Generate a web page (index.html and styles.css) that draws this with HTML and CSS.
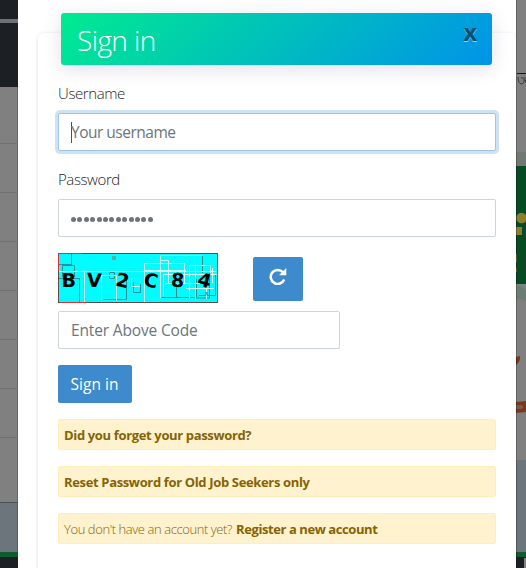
FILE: index.html
```html
<!DOCTYPE html>
<html lang="en">
<head>
    <meta charset="utf-8">
    <title>Sign in</title>
    <link rel="stylesheet" href="styles.css">
</head>
<body>
    <div class="page">
        <div class="backdrop-left">
            <div class="bar"></div>
            <div class="bar bar-tall"></div>
            <div class="row row-first"></div>
            <div class="row"></div>
            <div class="row"></div>
            <div class="row"></div>
            <div class="row"></div>
            <div class="row"></div>
            <div class="row"></div>
            <div class="row row-last"></div>
            <div class="footer-top"></div>
            <div class="footer-line"></div>
        </div>
        <div class="modal">
            <div class="card">
                <div class="card-header">
                    <h3>Sign in</h3>
                    <span class="close">x</span>
                </div>
                <form class="card-body">
                    <label for="username">Username</label>
                    <div class="form-control focused" id="username"><span class="caret"></span><span class="name-hint">Your username</span></div>
                    <label for="password" class="label-password">Password</label>
                    <div class="form-control dots" id="password"><i></i><i></i><i></i><i></i><i></i><i></i><i></i><i></i><i></i><i></i><i></i><i></i><i></i></div>
                    <div class="captcha-row">
                        <svg class="captcha" width="160" height="50" viewBox="0 0 160 50">
                            <rect width="160" height="50" fill="#00fcff"/>
                            <g fill="none" stroke="#2f8f94">
                                <path d="M0 11.500H13.500V0M4.500 24V12.500H16.500V24M0 25.500H21.500V49M45.500 46.500H68.500V23M51.500 19.500H56.500V25.500H51.500ZM75.500 29V39.500H82.500V31M103.500 44.500H138.500V26M144.500 3V20M110.500 12V30M151.500 20V45H138M157.500 21V42.500H141M118.500 31V45"/>
                            </g>
                            <g fill="none" stroke="#d2f7ef">
                                <path d="M0 18.500H159M26.500 49V17.500M43.500 47V22.500H58.500V48M73.500 25V33.500H82M86.500 49V10.500H110M86 17.500H128M102.500 45V2.500H144M110.500 30V7.500H103M105.500 43V21.500H159M110 10.500H126.500V30M131.500 45V12.500H152.500V20M137.500 48V11.500M107 30.500H142M128 35.500H156M148.500 46V23M154.500 15V30"/>
                            </g>
                            <path d="M54 3h4v4h-4zM147 39h3v3h-3z" fill="#5aa9ad"/>
                            <g class="captcha-text">
                                <text x="3.500" y="34">B</text>
                                <text x="29" y="34" transform="rotate(3 37 26)">V</text>
                                <text x="58" y="34" transform="rotate(12 65 27)">2</text>
                                <text x="86" y="34" transform="rotate(12 93 27)">C</text>
                                <text x="113" y="34" transform="rotate(5 120 27)">8</text>
                                <text x="140" y="34" transform="rotate(15 147 27)">4</text>
                            </g>
                            <rect x="0.500" y="0.500" width="159" height="49" fill="none" stroke="#66494b"/>
                            <path d="M159.500 14V50M0.500 3V18M3 49.500H28M0 .5H24" fill="none" stroke="#e33235"/>
                        </svg>
                        <button type="button" class="btn btn-refresh" aria-label="Refresh">
                            <svg width="18" height="17" viewBox="0 0 18 17">
                                <path d="M14 4.300A7 7 0 1 0 15.200 11.500" fill="none" stroke="#fff" stroke-width="2.500"/>
                                <path d="M17.300 0V7.300H10Z" fill="#fff"/>
                            </svg>
                        </button>
                    </div>
                    <div class="form-control code"><span class="code-hint">Enter Above Code</span></div>
                    <button type="button" class="btn btn-submit">Sign in</button>
                    <div class="alert"><a class="forgot">Did you forget your password?</a></div>
                    <div class="alert"><a class="reset">Reset Password for Old Job Seekers only</a></div>
                    <div class="alert"><span class="question">You don't have an account yet?</span><a class="register">Register a new account</a></div>
                </form>
            </div>
        </div>
        <div class="backdrop-right">
            <svg width="10" height="568" viewBox="0 0 10 568">
                <rect width="10" height="568" fill="#808080"/>
                <path d="M1 73.500H10" stroke="#171717"/>
                <path d="M2 77Q2 84 6 84Q9 83 8 79M5 78H10M8 80Q10 79 10 83" fill="none" stroke="#3c3c3c"/>
                <rect y="152" width="10" height="14" fill="#707a73"/>
                <rect y="166" width="10" height="118" fill="#074b24"/>
                <circle cx="5.500" cy="218" r="5.300" fill="#8a8130"/>
                <path d="M0 227H6V235H0Z" fill="#8a8130"/>
                <path d="M0 254H1V262H0ZM0 268H1V272H0Z" fill="#65702a"/>
                <path d="M0 284H10V301Q5 299 0 299Z" fill="#6b7d75"/>
                <path d="M0 284H10V290Q6 286 0 286Z" fill="#7c8480"/>
                <path d="M0 357L4 356Q5 361 0 365Z" fill="#753a20"/>
                <path d="M0 402L10 401V412L0 413Z" fill="#753a20"/>
                <path d="M0 406H6V408H0" fill="none" stroke="#84746d"/>
                <rect y="460" width="10" height="92" fill="#6c757b"/>
                <rect y="552" width="10" height="5" fill="#105b30"/>
                <rect y="557" width="10" height="11" fill="#1c1f24"/>
                <rect x="8" y="558" width="2" height="10" fill="#808080"/>
                <rect width="1" height="568" fill="#000" opacity=".25"/>
            </svg>
        </div>
    </div>
</body>
</html>
```

FILE: styles.css
```css
* {
    box-sizing: border-box;
}

body {
    margin: 0;
    font-family: "Open Sans", "Noto Sans", sans-serif;
    font-weight: 300;
    font-size: 16px;
    line-height: 24px;
    color: #212529;
    background: #fff;
}

.page {
    display: flex;
    height: 568px;
    overflow: hidden;
}

/* dimmed page behind the modal */
.backdrop-left {
    width: 18px;
    flex: none;
    background: #1c1f24;
}

.bar {
    height: 23px;
    border-bottom: 4px solid #6b7375;
}

.bar-tall {
    height: 64px;
    border: none;
}

.row {
    height: 49px;
    background: #808080;
    border-bottom: 1px solid #6f7071;
    box-shadow: inset -1px 0 0 #666;
}

.row-first {
    height: 57px;
}

.row-last {
    height: 65px;
    border-color: #4b5053;
}

.footer-top {
    height: 49px;
    background: #6c757b;
    box-shadow: inset -1px 0 0 #565d62;
}

.footer-line {
    height: 5px;
    background: #105b30;
}

.backdrop-right {
    width: 10px;
    flex: none;
}

.backdrop-right svg {
    display: block;
}

.modal {
    width: 498px;
    flex: none;
    padding: 33px 0 0 20px;
    background: #fff;
    overflow: hidden;
}

.card {
    height: 560px;
    padding: 0 20px;
    border-radius: 6px;
    box-shadow: 0 1px 4px rgba(0, 0, 0, 0.14);
}

.card-header {
    display: flex;
    justify-content: space-between;
    width: 431px;
    height: 52px;
    margin: 0 3px;
    padding: 0 15px 0 16px;
    transform: translateY(-20px);
    border-radius: 3px;
    background: linear-gradient(135deg, #00eb90, #0093e9);
    box-shadow: 0 4px 18px rgba(70, 70, 130, 0.16);
    color: #fff;
}

.card-header h3 {
    margin: 0;
    font-size: 28px;
    font-weight: 300;
    line-height: 54px;
    letter-spacing: -0.6px;
}

.close {
    font-size: 24px;
    font-weight: 700;
    line-height: 38px;
    color: #075273;
    text-shadow: 0 1px 0 #8cd4ee;
}

.card-body {
    display: flex;
    flex-direction: column;
    align-items: flex-start;
    margin-top: -4px;
}

label {
    height: 24px;
    margin-bottom: 8px;
    font-size: 15px;
    letter-spacing: -0.4px;
}

.label-password {
    margin-top: 16px;
    margin-bottom: 8px;
}

.form-control {
    display: flex;
    align-items: center;
    width: 438px;
    height: 38px;
    flex: none;
    padding: 0 12px;
    border: 1px solid #ced4da;
    border-radius: 2px;
    background: #fff;
    font-size: 15.5px;
    font-weight: 400;
    color: #6c757d;
}

.focused {
    border-color: #9fc5e8;
    box-shadow: 0 0 0 3px #cfe2f3;
}

.caret {
    width: 1px;
    height: 21px;
    margin-right: -1px;
    background: #495057;
}

.name-hint {
    letter-spacing: -0.5px;
}

.code-hint {
    letter-spacing: -0.15px;
}

.dots {
    gap: 1.4px;
    padding-top: 2px;
}

.dots i {
    width: 5px;
    height: 5px;
    border-radius: 50%;
    background: #6c757d;
}

.captcha-row {
    display: flex;
    height: 58px;
    margin-top: 16px;
}

.captcha-text {
    font-family: "DejaVu Sans", sans-serif;
    font-size: 19px;
    font-weight: 700;
}

.btn {
    border: none;
    border-radius: 2px;
    background: #3d8acd;
    color: #fff;
    font-family: inherit;
    font-weight: 400;
}

.btn-refresh {
    width: 50px;
    height: 44px;
    margin: 4px 0 0 35px;
    padding: 0 0 6px;
}

.btn-refresh svg {
    display: block;
    margin: 0 auto;
}

.code {
    width: 282px;
}

.btn-submit {
    width: 74px;
    height: 38px;
    margin: 16px 0 0;
    padding: 0 1px 0 0;
    font-size: 15.5px;
}

.alert {
    display: flex;
    align-items: center;
    width: 438px;
    height: 31px;
    margin-top: 16px;
    padding: 1px 5px 0;
    border: 1px solid #ffeeba;
    border-radius: 2px;
    background: #fff2cf;
    color: #856404;
    font-size: 13px;
    white-space: nowrap;
}

.alert a {
    font-weight: 700;
    letter-spacing: -0.35px;
}

.question {
    letter-spacing: -0.42px;
}

.alert .register {
    margin-left: 4px;
    letter-spacing: -0.42px;
}
```
